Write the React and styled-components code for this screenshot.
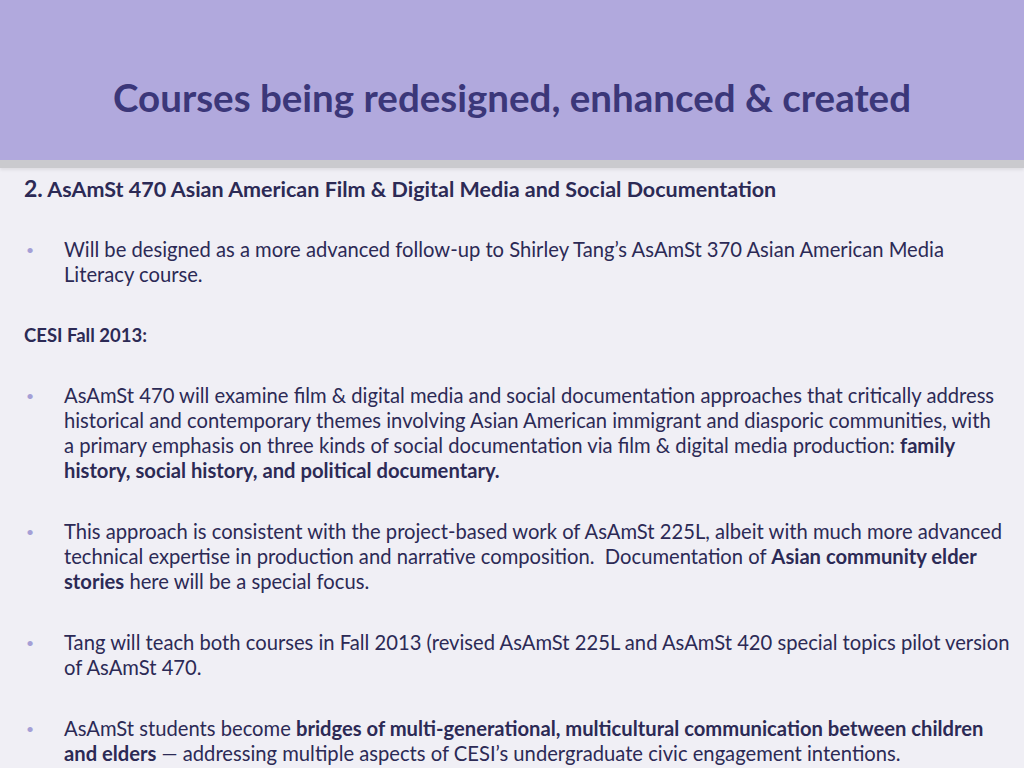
import React from "react";
import styled, { createGlobalStyle } from "styled-components";

const G = createGlobalStyle`
  body { margin:0; background:#efeff4; }
`;
const Page = styled.div`
  width:1024px; height:768px; overflow:hidden; background:#f0eff5;
  font-family: Lato, "Open Sans", sans-serif; color:#2c2a55;
`;
const Header = styled.div`
  height:160px; background:#b1a9dd; display:flex; align-items:center; justify-content:center;
  border-bottom:8px solid #cacace; box-shadow:0 2px 3px rgba(0,0,0,0.08);
`;
const Title = styled.h1`
  margin:0; padding-top:34px; font-size:38.5px; font-weight:700; color:#3b3779;
`;
const Body = styled.div`
  padding:6px 0 0 24px; display:flex; flex-direction:column;
`;
const Heading = styled.div`
  font-weight:700; font-size:21.5px; line-height:28px; margin-bottom:34px;
  span { font-size:23px; }
`;
const Item = styled.div`
  display:flex; font-size:20.2px; line-height:25px; margin-bottom:${p=>p.mb||36}px; white-space:nowrap;
`;
const Dot = styled.span`
  width:38px; flex:none; color:#a59fd6; font-size:14px; padding-left:2px;
`;
const Sub = styled.div`
  font-weight:700; font-size:18.5px; line-height:25px; margin-bottom:35px;
`;

export default function App(){
  return <Page><G/>
    <Header><Title>Courses being redesigned, enhanced &amp; created</Title></Header>
    <Body>
      <Heading><span>2.</span> AsAmSt 470 Asian American Film &amp; Digital Media and Social Documentation</Heading>
      <Item mb={36}><Dot>•</Dot><div>Will be designed as a more advanced follow-up to Shirley Tang’s AsAmSt 370 Asian American Media<br/>Literacy course.</div></Item>
      <Sub>CESI Fall 2013:</Sub>
      <Item><Dot>•</Dot><div>AsAmSt 470 will examine film &amp; digital media and social documentation approaches that critically address<br/>historical and contemporary themes involving Asian American immigrant and diasporic communities, with<br/>a primary emphasis on three kinds of social documentation via film &amp; digital media production: <b>family</b><br/><b>history, social history, and political documentary.</b></div></Item>
      <Item><Dot>•</Dot><div>This approach is consistent with the project-based work of AsAmSt 225L, albeit with much more advanced<br/>technical expertise in production and narrative composition.&nbsp; Documentation of <b>Asian community elder</b><br/><b>stories</b> here will be a special focus.</div></Item>
      <Item><Dot>•</Dot><div>Tang will teach both courses in Fall 2013 (revised AsAmSt 225L and AsAmSt 420 special topics pilot version<br/>of AsAmSt 470.</div></Item>
      <Item><Dot>•</Dot><div>AsAmSt students become <b>bridges of multi-generational, multicultural communication between children</b><br/><b>and elders</b> — addressing multiple aspects of CESI’s undergraduate civic engagement intentions.</div></Item>
    </Body>
  </Page>;
}
